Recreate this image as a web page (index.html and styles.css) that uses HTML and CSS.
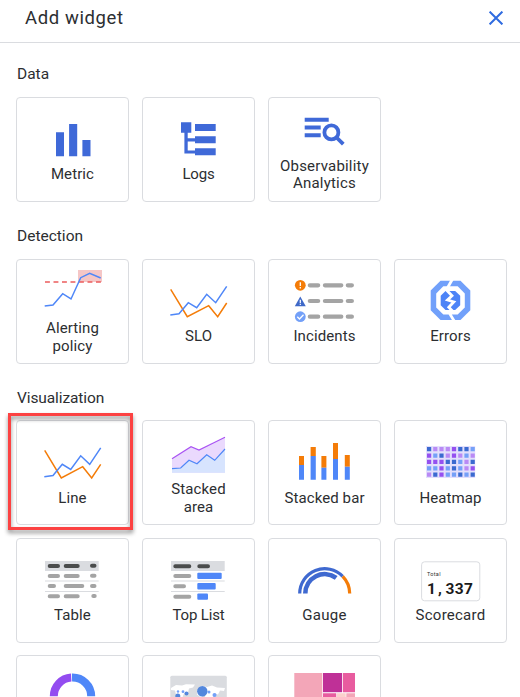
FILE: index.html
```html
<!DOCTYPE html>
<html lang="en">
<head>
<meta charset="utf-8">
<title>Add widget</title>
<link rel="stylesheet" href="styles.css">
</head>
<body>
<header class="header">
  <h1 class="title">Add widget</h1>
  <button class="close" aria-label="Close"><svg width="14" height="14" viewBox="0 0 14 14"><path d="M.6.6 13.4 13.4M13.4.6.6 13.4" stroke="#2f6be0" stroke-width="2"/></svg></button>
</header>
<main class="content">
  <section class="section">
    <h2 class="heading">Data</h2>
    <div class="grid">
      <div class="card">
        <svg class="art" viewBox="17 98 111 67"><path fill="#3f69d8" d="M56 132.2h8v24h-8zM69.1 124h8.1v32.2h-8.1zM82.4 140h8.1v16.2h-8.1z"/></svg>
        <span class="label">Metric</span>
      </div>
      <div class="card">
        <svg class="art" viewBox="143 98 111 67"><path fill="#3f69d8" d="M181 122.2h10.3v10.5H181zM195 124h20.7v7H195zM195 136.3h20.7v7H195zM195 148.3h20.7v7H195zM184.4 132h3.3v6.2h7.8v3.2h-7.8v9h7.8v3.2h-11.1z"/></svg>
        <span class="label tight">Logs</span>
      </div>
      <div class="card">
        <svg class="art short" viewBox="269 98 111 59"><path fill="#3f69d8" d="M304.7 117.7h24v4h-24zM304.7 125.4h16v4h-16zM304.7 133.3h16v4h-16z"/><circle cx="331.4" cy="132.4" r="7" fill="none" stroke="#3f69d8" stroke-width="3.8"/><path d="m336 137 7.3 7.2" stroke="#3f69d8" stroke-width="3.8"/></svg>
        <span class="label double">Observability<br>Analytics</span>
      </div>
    </div>
  </section>
  <section class="section">
    <h2 class="heading">Detection</h2>
    <div class="grid">
      <div class="card">
        <svg class="art short" viewBox="17 260 111 59"><path fill="#f5c6c6" d="M78 270h24v12H78z"/><path d="M45 282h56" stroke="#ec5c5c" stroke-width="1.7" stroke-dasharray="4.9 3.6"/><path class="stroke blue" d="m44.7 306 8.3-1 9.7-11.3 8.3 5.3 9.7-21.3 9-4.4 11 4.7"/></svg>
        <span class="label">Alerting<br>policy</span>
      </div>
      <div class="card">
        <svg class="art" viewBox="143 260 111 67"><path class="stroke orange" d="m170.7 289.3 16.6 27.4 21.4-11 9 11 9-13.7"/><path class="stroke blue" d="m170.3 315 8.7-1.3 9.3-11 8.4 5 10-13.4 9 8.4 11-16.4"/></svg>
        <span class="label">SLO</span>
      </div>
      <div class="card">
        <svg class="art" viewBox="269 260 111 67"><g stroke="#a4a4a4" stroke-width="4.2" stroke-linecap="round"><path d="M309.8 285.3h8.4M324.9 285.3h16.4M347.8 285.3h4.1M309.8 301h8.4M324.9 301h16.4M347.8 301h4.1M309.8 316.7h8.4M324.9 316.7h16.4M347.8 316.7h4.1"/></g><circle cx="300.3" cy="285.3" r="5.4" fill="#f47c08"/><path d="M300.3 282.2v3.9M300.3 287.1v1.3" stroke="#fff" stroke-width="1.3"/><path fill="#3f69c8" d="m300.3 296.6 5.5 9.6h-11z"/><path d="M300.3 299.8v3.2M300.3 303.7v1.2" stroke="#fff" stroke-width="1.2"/><circle cx="300.3" cy="316.7" r="5.4" fill="#73a0f8"/><path d="m297.3 316.8 2.2 2.2 4-4.3" stroke="#fff" stroke-width="1.3" fill="none"/></svg>
        <span class="label">Incidents</span>
      </div>
      <div class="card">
        <svg class="art" viewBox="395 260 111 67"><path fill="#71a0fa" d="M440.5 280.7h20l9.8 9.8v19.8l-9.8 9.7h-20l-9.8-9.7v-19.8z"/><path fill="#fff" d="M443.3 286.3h14.4l7.1 7.1v14l-7.1 7.1h-14.4l-7.1-7.1v-14z"/><path fill="#4d84f7" d="M445.5 291h9.7l5 4.8v9.5l-5 4.8h-9.7l-4.8-4.8v-9.5z"/><path fill="none" stroke="#fff" stroke-width="2.8" d="m452.5 279-4.8 8.5-.7 3 5 5.3-4.5 4.2 6.3 2-5 5.3 3.4 3.4-2 3.8 4.3 7"/></svg>
        <span class="label">Errors</span>
      </div>
    </div>
  </section>
  <section class="section visualization">
    <h2 class="heading">Visualization</h2>
    <div class="grid">
      <div class="card selected">
        <svg class="art" viewBox="17 421 111 67"><path class="stroke orange" d="m44.7 450.3 16.6 27.7 21.4-11.3 9 11.3 9-13.7"/><path class="stroke blue" d="m44.3 476.7 8.7-1.2 9.3-11.2 8.4 5.2 10-13.7 9 8.5 11-16.5"/></svg>
        <span class="label lower">Line</span>
      </div>
      <div class="card">
        <svg class="art short" viewBox="143 421 111 59"><path fill="#ead9fd" d="m172 458.7 19-12 8 3.3 14.3-7 11.7-5.7v35.4h-53z"/><path fill="#d7e4fe" d="m172 468.7 8.7-.7 8.3-7.7 8 3.4 9.7-9 8 5.6 10.3-11.3v23.7h-53z"/><path fill="none" stroke="#a953f3" stroke-width="1.2" d="m172 458.7 19-12 8 3.3 14.3-7 11.7-5.7"/><path fill="none" stroke="#4f87f8" stroke-width="1.2" d="m172 468.7 8.7-.7 8.3-7.7 8 3.4 9.7-9 8 5.6 10.3-11.3"/></svg>
        <span class="label">Stacked<br>area</span>
      </div>
      <div class="card">
        <svg class="art" viewBox="269 421 111 67"><path fill="#f47c08" d="M299 456h5v9h-5zM310.6 447h5.2v9h-5.2zM321.4 456h5v11.7h-5zM333 443h5v16h-5zM344.8 455h5v11.7h-5z"/><path fill="#4f87f8" d="M299 465h5v14.8h-5zM310.6 456h5.2v23.8h-5.2zM321.4 467.7h5v12.1h-5zM333 459h5v20.8h-5zM344.8 466.7h5v13.1h-5z"/></svg>
        <span class="label lower">Stacked bar</span>
      </div>
      <div class="card">
        <svg class="art" viewBox="395 421 111 67"><path fill="#e3dffc" d="M426 446h49.2v32H426z"/><g fill="none" stroke-width="4.3"><path stroke="#3b6ad0" d="M427 449.2h4.2M458.2 449.2h4.2M464.4 449.2h4.2M439.4 455.6h4.2M445.7 461.9h4.2M451.9 461.9h4.2M470.6 461.9h4.2M451.9 468.3h4.2M433.2 474.7h4.2M458.2 474.7h4.2M470.6 474.7h4.2"/><path stroke="#b98af5" d="M433.2 449.2h4.2M439.4 449.2h4.2M445.7 449.2h4.2M445.7 455.6h4.2M458.2 455.6h4.2M470.6 455.6h4.2M464.4 461.9h4.2M464.4 468.3h4.2M427 474.7h4.2"/><path stroke="#9550f0" d="M451.9 449.2h4.2M427 455.6h4.2M451.9 455.6h4.2M427 461.9h4.2M433.2 461.9h4.2M439.4 461.9h4.2M439.4 468.3h4.2M470.6 468.3h4.2M439.4 474.7h4.2"/><path stroke="#75a0f8" d="M470.6 449.2h4.2M433.2 455.6h4.2M464.4 455.6h4.2M458.2 461.9h4.2M427 468.3h4.2M433.2 468.3h4.2M445.7 468.3h4.2M458.2 468.3h4.2M445.7 474.7h4.2M451.9 474.7h4.2M464.4 474.7h4.2"/></g></svg>
        <span class="label lower">Heatmap</span>
      </div>
      <div class="card">
        <svg class="art" viewBox="17 539 111 67"><path fill="#dadce0" d="M45 561h53.7v10H45zM45 580.6h53.7v1H45zM45 590.9h53.7v1H45z"/><g stroke-width="4" stroke-linecap="round"><path stroke="#4a4c4c" d="M49.7 566H58M65.7 566h12M92 565.7h2.5"/><path stroke="#a4a4a4" d="M49.7 576H58M65.7 576h12M92 575.8h2.5M49.7 586.1H54M65.7 586.1h16.6M92 585.9h2.5M49.7 596.2H58M65.7 596.2h12M93.3 596h1.4"/></g></svg>
        <span class="label">Table</span>
      </div>
      <div class="card">
        <svg class="art" viewBox="143 539 111 67"><path fill="#dadce0" d="M171 561h53.7v10H171zM171 580.6h53.7v1H171zM171 590.9h53.7v1H171z"/><g stroke-width="4" stroke-linecap="round"><path stroke="#4a4c4c" d="M175.3 566.3h14M199.3 566.3H208"/><path stroke="#a4a4a4" d="M175.3 576h14M175.3 586.3h8.7M175.3 596.8h14"/></g><g fill="#4f87f8"><rect x="197.3" y="572.7" width="24.4" height="6.4" rx="1"/><rect x="197.3" y="583" width="18.4" height="6.4" rx="1"/><rect x="197.3" y="593.4" width="10.7" height="6.4" rx="1"/></g></svg>
        <span class="label tight">Top List</span>
      </div>
      <div class="card">
        <svg class="art" viewBox="269 539 111 67"><g fill="none"><path stroke="#3f69d0" stroke-width="3.2" d="M299.7 593.5a25 25 0 0 1 43-17.2"/><path stroke="#f47c08" stroke-width="3.2" d="M342.7 576.3a25 25 0 0 1 7 17.2"/><path stroke="#3f69d0" stroke-width="4.6" d="M305.3 593.5a19.4 19.4 0 0 1 30.9-15.6"/></g></svg>
        <span class="label wide">Gauge</span>
      </div>
      <div class="card">
        <svg class="art" viewBox="395 539 111 67"><rect x="421.6" y="561.8" width="58.2" height="39" rx="3" fill="#fff" stroke="#dadce0"/><text class="total" x="427" y="576.3">Total</text><text class="score" x="427 438 445.5 454.8 464" y="594">1,337</text></svg>
        <span class="label wide">Scorecard</span>
      </div>
      <div class="card">
        <svg class="art" viewBox="17 656 111 67"><g fill="none" stroke-width="8"><path stroke="#934cf0" d="M53.8 696.3a18.7 18.7 0 0 1 17.4-18.7"/><path stroke="#4f87f8" d="M72 677.6a18.7 18.7 0 0 1 19.2 18.7"/></g></svg>
      </div>
      <div class="card">
        <svg class="art" viewBox="143 656 111 67"><rect x="170.3" y="675.8" width="56.5" height="38" rx="1.5" fill="#dadce0"/><path fill="#fff" d="m171 688 5-3 6 .5 4-1.3 9 .3-2 3-4 1-1 4-4 1-2 5h-5l-2-8-4-.5zM197 691l4-5 6 1 5-1.5 5 2 8 .5-1 3-4-.5-2 4-3-1-3 5h-6l-2-4-3 3-4-3z"/><g fill="#5387dd"><circle cx="202.3" cy="691.3" r="5.2"/><circle cx="177.8" cy="696" r="2.5"/><circle cx="186.5" cy="693.4" r="2"/><circle cx="183" cy="691.7" r="1.4" fill="#73a0f8"/><circle cx="178" cy="691.5" r="1.2" fill="#73a0f8"/><circle cx="214.5" cy="695" r="2" fill="#73a0f8"/><circle cx="209" cy="692" r="1.5" fill="#73a0f8"/></g></svg>
      </div>
      <div class="card">
        <svg class="art" viewBox="269 656 111 67"><path fill="#f3a6b8" d="M294.3 673h28v38h-28zM346.3 693.2H355V711h-8.7z"/><path fill="#bf3097" d="M323 673h19v19.2h-19z"/><path fill="#e85c9f" d="M342.8 673H355v19.2h-12.2zM323 693.2h13.3V711H323z"/><path fill="#fbd0cc" d="M337 693.2h8.7V711H337z"/></svg>
      </div>
    </div>
  </section>
</main>
</body>
</html>
```

FILE: styles.css
```css
* { box-sizing: border-box; }
html, body { height: 100%; }
body {
  display: flex;
  flex-direction: column;
  margin: 0;
  overflow: hidden;
  background: #fff;
  color: #2c2e31;
  font-family: Roboto, "Liberation Sans", sans-serif;
}
.header {
  display: flex;
  flex: none;
  align-items: center;
  justify-content: space-between;
  height: 43px;
  padding: 0 17.5px 7px 25px;
  border-bottom: 1px solid #dadce0;
}
.title {
  margin: 0;
  font-size: 18.5px;
  font-weight: 400;
  line-height: 24px;
  letter-spacing: .6px;
}
.close {
  display: flex;
  padding: 0;
  border: 0;
  background: none;
}
.content {
  flex: 1;
  min-height: 0;
  overflow: hidden;
  padding: 21px 13px 0 16px;
}
.section { margin-bottom: 24px; }
.heading {
  margin: 0 0 13px 1px;
  font-size: 15.5px;
  font-weight: 400;
  line-height: 20px;
}
.visualization { margin-bottom: 0; }
.visualization .heading {
  margin-bottom: 12px;
  letter-spacing: -.1px;
}
.grid {
  display: grid;
  grid-template-columns: repeat(4, 113px);
  grid-auto-rows: 105px;
  gap: 12.5px 13px;
}
.card {
  position: relative;
  display: flex;
  flex-direction: column;
  border: 1px solid #dadce0;
  border-radius: 4px;
}
.art {
  display: block;
  flex: none;
  width: 111px;
  height: 67px;
}
.art.short { height: 59px; }
.label {
  padding-top: 1px;
  font-size: 15px;
  line-height: 17.5px;
  letter-spacing: .1px;
  text-align: center;
  white-space: nowrap;
}
.label.lower { padding-top: 2px; }
.label.double {
  line-height: 17px;
  letter-spacing: .2px;
}
.label.tight { letter-spacing: -.15px; }
.label.wide { letter-spacing: .25px; }
.stroke { fill: none; stroke-width: 1.5; }
.blue { stroke: #4f87f8; }
.orange { stroke: #f47c08; }
.selected::after {
  content: "";
  position: absolute;
  inset: -8px -5px -6px -9px;
  border: 3px solid #fc4242;
  filter: drop-shadow(0 3px 2px rgba(0, 0, 0, .45));
}
.total { font: 5.5px Roboto, sans-serif; letter-spacing: .3px; fill: #333; }
.score { font: 700 15.5px Roboto, sans-serif; fill: #1b1b1b; }
```
